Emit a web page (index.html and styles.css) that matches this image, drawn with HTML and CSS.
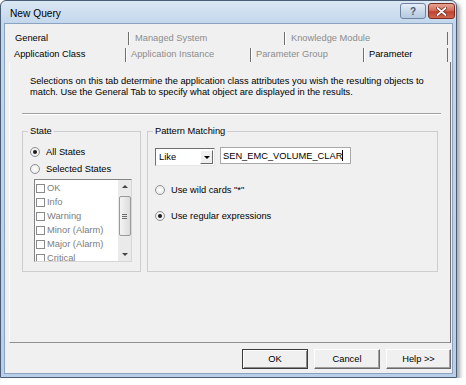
FILE: index.html
```html
<!DOCTYPE html>
<html lang="en">
<head>
  <meta charset="UTF-8" />
  <title>New Query</title>
  <link rel="stylesheet" href="styles.css">
</head>
<body>
  <div class="window">
    <div class="titlebar">
      <span class="title">New Query</span>
      <div class="caption">
        <span class="cap-btn help">?</span>
        <span class="cap-btn close">
          <svg width="11" height="9" viewBox="0 0 11 9">
            <path d="M1.5 1 L9.5 8 M9.5 1 L1.5 8" stroke="#6b1d14" stroke-width="3.2" stroke-linecap="round"/>
            <path d="M1.5 1 L9.5 8 M9.5 1 L1.5 8" stroke="#fff" stroke-width="1.8" stroke-linecap="round"/>
          </svg>
        </span>
      </div>
    </div>

    <div class="client">
      <div class="tab-row row-back">
        <div class="tab">General</div>
        <div class="tab off">Managed System</div>
        <div class="tab off">Knowledge Module</div>
      </div>
      <div class="tab-row row-front">
        <div class="tab">Application Class</div>
        <div class="tab off">Application Instance</div>
        <div class="tab off">Parameter Group</div>
        <div class="tab">Parameter</div>
      </div>

      <div class="panel">
        <p class="desc">Selections on this tab determine the application class attributes you wish the resulting objects to<br>match. Use the General Tab to specify what object are displayed in the results.</p>
        <div class="rule"></div>

        <div class="groups">
          <fieldset class="group state">
            <legend>State</legend>
            <div class="radio-row first"><span class="radio on"></span>All States</div>
            <div class="radio-row"><span class="radio"></span>Selected States</div>
            <div class="list">
              <div class="items">
                <div class="item"><span class="check"></span>OK</div>
                <div class="item"><span class="check"></span>Info</div>
                <div class="item"><span class="check"></span>Warning</div>
                <div class="item"><span class="check"></span>Minor (Alarm)</div>
                <div class="item"><span class="check"></span>Major (Alarm)</div>
                <div class="item"><span class="check"></span>Critical</div>
              </div>
              <div class="scrollbar">
                <div class="arrow up"></div>
                <div class="thumb"><span></span><span></span><span></span></div>
                <div class="arrow down"></div>
              </div>
            </div>
          </fieldset>

          <fieldset class="group pattern">
            <legend>Pattern Matching</legend>
            <div class="match-row">
              <div class="combo">
                <span class="combo-text">Like</span>
                <span class="combo-btn"></span>
              </div>
              <div class="field">SEN_EMC_VOLUME_CLAR<span class="caret"></span></div>
            </div>
            <div class="radio-row wild"><span class="radio"></span>Use wild cards "*"</div>
            <div class="radio-row regex"><span class="radio on"></span>Use regular expressions</div>
          </fieldset>
        </div>
      </div>

      <div class="buttons">
        <button class="btn default">OK</button>
        <button class="btn">Cancel</button>
        <button class="btn">Help &gt;&gt;</button>
      </div>
    </div>
  </div>
</body>
</html>
```

FILE: styles.css
```css
* { box-sizing: border-box; }
body {
  margin: 0; background: #fff;
  font-family: "Liberation Sans", Arial, sans-serif;
  font-size: 9.3px; color: #000;
}
.window {
  width: 457px; height: 378px;
  border: 1px solid #4a5d74; border-radius: 6px 6px 0 0;
  background: linear-gradient(#dbe7f4, #c3d7ec 22px, #b9cfe8);
  padding: 0 3px 3px;
  box-shadow: 3px 3px 4px rgba(0,0,0,.35);
  display: flex; flex-direction: column;
}
.titlebar {
  height: 22px; display: flex; align-items: flex-start;
  padding-left: 6px;
}
.title { font-size: 10.2px; margin-top: 7px; }
.caption { margin-left: auto; display: flex; gap: 2px; margin-top: 2px; margin-right: -2px; }
.cap-btn {
  height: 16px; border: 1px solid #6f83a0; border-radius: 3px;
  display: flex; align-items: center; justify-content: center;
}
.help {
  width: 26px; color: #4d5a6c; font-size: 10px; font-weight: bold;
  background: linear-gradient(#e6eef8, #c9d8ea 50%, #b6c9e1);
}
.close {
  width: 27px; border-color: #7b2b22;
  background: linear-gradient(#e8a493, #d0705c 45%, #c0432f 55%, #d2654f);
}
.client {
  flex: 1; background: #f0f0f0;
  border: 1px solid #8ba3c0;
  padding: 5px 0 0 4px;
  display: flex; flex-direction: column;
}

/* tabs */
.tab-row { display: grid; align-items: end; width: 439px; }
.row-back { height: 16px; grid-template-columns: 119px 156px 164px; }
.row-front { height: 17px; grid-template-columns: 116px 125px 113px 85px; }
.tab {
  height: 13px; line-height: 12px; padding-left: 6px;
  white-space: nowrap;
}
.row-front .tab { height: 14px; line-height: 13px; padding-left: 5px; }
.tab + .tab { border-left: 1px solid #6f6f6f; box-shadow: inset 1px 0 #fff; }
.tab:last-child { border-right: 1px solid #6f6f6f; }
.tab.off { color: #8c8c8c; }

.panel {
  width: 442px; height: 281px;
  border: 1px solid #fff; border-right-color: #6f6f6f; border-bottom-color: #8f8f8f;
  border-top: 0;
}
.desc { margin: 0; padding: 14px 0 0 20px; line-height: 11px; white-space: nowrap; }
.rule {
  margin: 15px 9px 0 12px; height: 2px;
  border-top: 1px solid #a0a0a0; border-bottom: 1px solid #fff;
}

/* group boxes */
.groups { display: flex; gap: 6px; margin: 11px 0 0 12px; }
.group {
  margin: 0; padding: 0 0 0 7px; min-width: 0;
  height: 146px; border: 1px solid #cdcdcd;
}
.group legend { margin-left: -2px; padding: 0 2px; line-height: 11px; }
.state { width: 119px; }
.pattern { width: 291px; }

.radio-row { height: 17px; display: flex; align-items: center; gap: 6px; white-space: nowrap; }
.state .first { margin-top: 6px; }
.radio {
  width: 10px; height: 10px; border-radius: 50%;
  border: 1px solid #8f9193;
  background: radial-gradient(#fff, #e4e4e4);
  display: flex; align-items: center; justify-content: center;
}
.radio.on::after {
  content: ""; width: 4px; height: 4px; border-radius: 50%; background: #1a1a1a;
}

.list {
  width: 98px; height: 83px; margin: 2px 0 0 4px;
  border: 1px solid #848484; border-right-color: #d6d6d6; border-bottom-color: #d6d6d6;
  background: #fff; display: flex; overflow: hidden;
}
.items { flex: 1; color: #7d7d7d; padding-top: 1px; }
.item { height: 14px; display: flex; align-items: center; gap: 2px; padding-left: 1px; }
.check { width: 9px; height: 9px; border: 1px solid #8a8a8a; background: #fff; }
.scrollbar {
  width: 13px; background: #eaeaea;
  display: flex; flex-direction: column; align-items: center;
}
.arrow { height: 13px; width: 100%; display: flex; align-items: center; justify-content: center; }
.arrow::after {
  content: ""; border-left: 3px solid transparent; border-right: 3px solid transparent;
}
.up::after { border-bottom: 3px solid #444; }
.down { margin-top: auto; }
.down::after { border-top: 3px solid #444; }
.thumb {
  width: 12px; height: 40px; margin-top: 3px;
  border: 1px solid #9a9a9a; border-radius: 2px;
  background: linear-gradient(90deg, #f4f4f4, #dcdcdc);
  display: flex; flex-direction: column; align-items: center; justify-content: center; gap: 1px;
}
.thumb span { width: 5px; height: 1px; background: #6d6d6d; }

.match-row { display: flex; gap: 5px; margin-top: 10px; align-items: flex-start; }
.combo {
  width: 60px; height: 18px; margin-top: 1px;
  border: 1px solid #6f6f6f; border-right-color: #e8e8e8; border-bottom-color: #e8e8e8;
  background: #fff; display: flex; align-items: center; padding: 1px;
}
.combo-text { flex: 1; padding-left: 2px; }
.combo-btn {
  width: 13px; height: 14px; background: #f0f0f0;
  border: 1px solid #fff; border-right-color: #6a6a6a; border-bottom-color: #6a6a6a;
  display: flex; align-items: center; justify-content: center;
}
.combo-btn::after {
  content: ""; border-left: 3px solid transparent; border-right: 3px solid transparent;
  border-top: 3px solid #000;
}
.field {
  width: 131px; height: 17px;
  border: 1px solid #a9a9a9; background: #fff;
  padding-left: 2px; display: flex; align-items: center;
}
.caret { width: 1px; height: 11px; background: #000; }
.wild { margin-top: 15px; }
.regex { margin-top: 9px; }

/* bottom buttons */
.buttons { display: flex; justify-content: flex-end; gap: 6px; margin-top: 6px; padding-right: 1px; }
.btn {
  width: 66px; height: 20px; padding: 0;
  font: inherit; color: #000; background: #f0f0f0;
  border: 1px solid #fff; border-right-color: #6a6a6a; border-bottom-color: #6a6a6a;
  box-shadow: inset -1px -1px #a0a0a0;
}
.btn:last-child { width: 65px; }
.btn.default { border-color: #3a3a3a; box-shadow: inset 1px 1px #fff, inset -1px -1px #8a8a8a; }
```
